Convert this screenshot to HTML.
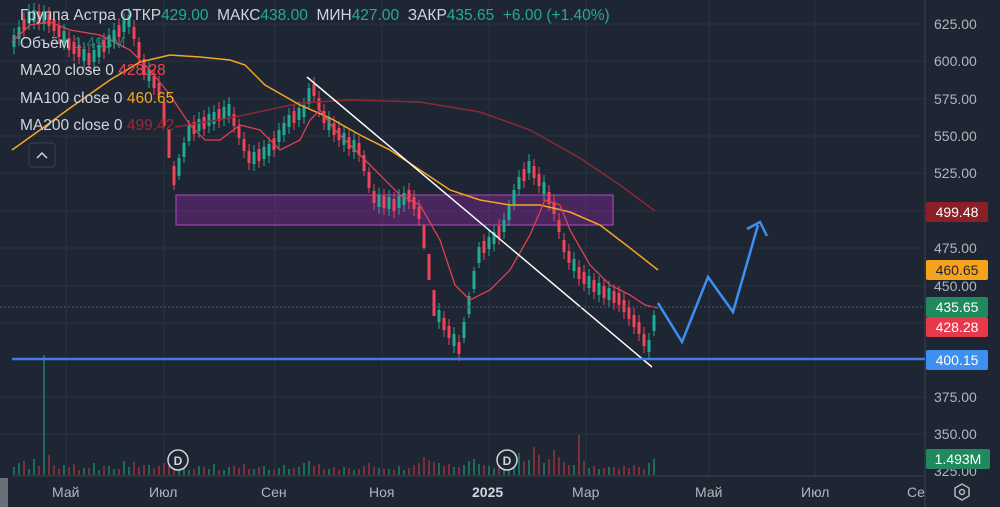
<!DOCTYPE html>
<html><head><meta charset="utf-8"><style>
html,body{margin:0;padding:0;background:#1e2633;width:1000px;height:507px;overflow:hidden;font-family:"Liberation Sans",sans-serif}
svg{position:absolute;left:0;top:0}
.lg{position:absolute;left:20px;font-size:15.5px;color:#d1d4dc;white-space:nowrap}
.g{color:#22ab94}.r{color:#f04458}.o{color:#f5a623}.dr{color:#9b2a34}
.tag{position:absolute;left:926px;width:62px;height:20px;border-radius:2px;font-size:14px;line-height:20px;text-align:center;color:#fff}
.ax{position:absolute;left:934px;font-size:14px;color:#b2b5be}
.tl{position:absolute;top:484px;font-size:14px;color:#b2b5be}
</style></head><body>
<svg width="1000" height="507" xmlns="http://www.w3.org/2000/svg">
<g stroke="#2a3340" stroke-width="1">
<line x1="0" y1="24" x2="925" y2="24"/><line x1="0" y1="61" x2="925" y2="61"/><line x1="0" y1="99" x2="925" y2="99"/><line x1="0" y1="136" x2="925" y2="136"/><line x1="0" y1="173" x2="925" y2="173"/><line x1="0" y1="211" x2="925" y2="211"/><line x1="0" y1="248" x2="925" y2="248"/><line x1="0" y1="286" x2="925" y2="286"/><line x1="0" y1="323" x2="925" y2="323"/><line x1="0" y1="397" x2="925" y2="397"/><line x1="0" y1="434" x2="925" y2="434"/>
<line x1="66" y1="0" x2="66" y2="476"/><line x1="164" y1="0" x2="164" y2="476"/><line x1="275" y1="0" x2="275" y2="476"/><line x1="382" y1="0" x2="382" y2="476"/><line x1="489" y1="0" x2="489" y2="476"/><line x1="586" y1="0" x2="586" y2="476"/><line x1="709" y1="0" x2="709" y2="476"/><line x1="815" y1="0" x2="815" y2="476"/>
</g>
<line x1="925" y1="0" x2="925" y2="507" stroke="#3a4350"/>
<line x1="12" y1="476" x2="925" y2="476" stroke="#3a4350"/>
<rect x="0" y="478" width="8" height="29" fill="#6b7078"/>
<rect x="176" y="195" width="437" height="30" fill="rgba(156,39,176,0.35)" stroke="#b04cc0" stroke-width="1"/>
<!-- volume -->
<path stroke="#1d6b5c" stroke-width="2" fill="none" d="M14 475v-8M19 475v-12M29 475v-6M34 475v-16M44 475v-120M64 475v-10M84 475v-7M94 475v-12M99 475v-5M109 475v-9M114 475v-6M124 475v-14M129 475v-8M149 475v-10M179 475v-12M184 475v-7M189 475v-5M199 475v-9M209 475v-6M214 475v-11M224 475v-5M229 475v-8M254 475v-6M264 475v-9M269 475v-5M279 475v-7M284 475v-10M289 475v-6M299 475v-8M304 475v-12M309 475v-14M329 475v-6M344 475v-8M354 475v-5M379 475v-7M389 475v-6M399 475v-9M404 475v-5M439 475v-12M454 475v-8M464 475v-10M469 475v-14M474 475v-16M479 475v-11M489 475v-9M494 475v-7M504 475v-8M509 475v-12M514 475v-18M519 475v-22M529 475v-15M544 475v-12M574 475v-10M589 475v-7M599 475v-6M609 475v-8M649 475v-12M654 475v-16"/>
<path stroke="#7a2f3a" stroke-width="2" fill="none" d="M24 475v-14M39 475v-9M49 475v-20M54 475v-10M59 475v-6M69 475v-8M74 475v-11M79 475v-5M89 475v-7M104 475v-9M119 475v-6M134 475v-13M139 475v-8M144 475v-10M154 475v-7M159 475v-9M164 475v-12M169 475v-15M174 475v-11M194 475v-6M204 475v-8M219 475v-5M234 475v-9M239 475v-7M244 475v-11M249 475v-6M259 475v-8M274 475v-5M294 475v-7M314 475v-9M319 475v-11M324 475v-6M334 475v-8M339 475v-5M349 475v-7M359 475v-6M364 475v-9M369 475v-12M374 475v-8M384 475v-6M394 475v-5M409 475v-7M414 475v-10M419 475v-12M424 475v-18M429 475v-15M434 475v-13M444 475v-9M449 475v-11M459 475v-8M484 475v-10M499 475v-9M524 475v-14M534 475v-28M539 475v-20M549 475v-16M554 475v-25M559 475v-18M564 475v-13M569 475v-10M579 475v-40M584 475v-14M594 475v-9M604 475v-7M614 475v-8M619 475v-6M624 475v-9M629 475v-7M634 475v-10M639 475v-8M644 475v-6"/>
<!-- candles green -->
<path stroke="#22ab94" stroke-width="1" fill="none" d="M14 28V54M19 20V46M29 4V30M34 3V29M44 5V31M64 24V50M84 42V68M94 43V69M99 38V64M109 28V54M114 23V49M124 13V39M129 8V34M149 62V88M179 154V180M184 137V163M189 120V146M199 112V138M209 107V133M214 105V131M224 100V126M229 97V123M254 145V171M264 140V166M269 137V163M279 123V149M284 116V142M289 108V134M299 101V127M304 98V124M309 83V109M329 111V137M344 126V152M354 133V159M379 188V214M389 190V216M399 189V215M404 186V212M439 303V329M454 327V353M464 317V343M469 292V318M474 267V293M479 242V268M489 230V256M494 225V251M504 213V239M509 200V226M514 184V210M519 170V196M529 154V180M544 175V201M574 252V278M589 269V295M599 276V302M609 281V307M649 333V359M654 310V336"/>
<path stroke="#22ab94" stroke-width="3" fill="none" d="M14 35V47M19 27V39M29 11V23M34 10V22M44 12V24M64 31V43M84 49V61M94 50V62M99 45V57M109 35V47M114 30V42M124 20V32M129 15V27M149 69V81M179 158V176M184 143V157M189 125V141M199 119V131M209 114V126M214 112V124M224 107V119M229 104V116M254 152V164M264 147V159M269 144V156M279 130V142M284 123V135M289 115V127M299 108V120M304 105V117M309 88V104M329 118V130M344 133V145M354 140V152M379 195V207M389 197V209M399 196V208M404 193V205M439 310V322M454 334V346M464 322V338M469 296V314M474 271V289M479 247V263M489 237V249M494 232V244M504 220V232M509 206V220M514 190V204M519 177V189M529 161V173M544 182V194M574 259V271M589 276V288M599 283V295M609 288V300M649 340V352M654 315V331"/>
<!-- candles red -->
<path stroke="#f04458" stroke-width="1" fill="none" d="M24 12V38M39 4V30M49 7V33M54 12V38M59 18V44M69 31V57M74 35V61M79 38V64M89 46V72M104 33V59M119 18V44M134 20V46M139 37V63M144 54V80M154 69V95M159 76V102M164 101V127M169 131V157M174 161V190M194 115V141M204 110V136M219 102V128M234 107V133M239 119V145M244 132V158M249 144V170M259 142V168M274 131V157M294 104V130M314 77V103M319 91V117M324 104V130M334 116V142M339 121V147M349 130V156M359 136V162M364 150V176M369 167V193M374 184V210M384 189V215M394 192V218M409 183V209M414 190V216M419 200V226M424 224V250M429 254V280M434 290V316M444 311V337M449 319V345M459 335V361M484 234V260M499 219V245M524 162V188M534 159V185M539 167V193M549 185V211M554 195V221M559 213V239M564 233V259M569 244V270M579 260V286M584 265V291M594 273V299M604 279V305M614 284V310M619 286V312M624 293V319M629 300V326M634 308V334M639 315V341M644 327V353"/>
<path stroke="#f04458" stroke-width="3" fill="none" d="M24 19V31M39 11V23M49 14V26M54 19V31M59 25V37M69 38V50M74 42V54M79 45V57M89 53V65M104 40V52M119 25V37M134 27V39M139 42V58M144 59V75M154 76V88M159 83V95M164 102V126M169 130V158M174 166V185M194 122V134M204 117V129M219 109V121M234 114V126M239 126V138M244 139V151M249 151V163M259 149V161M274 138V150M294 111V123M314 84V96M319 98V110M324 111V123M334 123V135M339 128V140M349 137V149M359 143V155M364 155V171M369 172V188M374 191V203M384 196V208M394 199V211M409 190V202M414 197V209M419 207V219M424 226V248M429 254V280M434 290V316M444 318V330M449 326V338M459 342V354M484 241V253M499 226V238M524 169V181M534 166V178M539 174V186M549 192V204M554 202V214M559 220V232M564 240V252M569 251V263M579 267V279M584 272V284M594 280V292M604 286V298M614 291V303M619 293V305M624 300V312M629 307V319M634 315V327M639 322V334M644 334V346"/>
<polyline fill="none" stroke="#8b2a35" stroke-width="1.5" points="175,127 230,118 300,103 350,100 420,102 480,112 530,130 580,158 620,185 655,211"/>
<polyline fill="none" stroke="#f5a623" stroke-width="1.5" points="12,150 40,130 70,108 110,80 140,62 170,55 200,57 230,60 245,65 265,85 300,105 330,118 360,135 390,150 420,170 450,190 480,200 510,205 540,205 570,212 600,225 630,248 658,270"/>
<polyline fill="none" stroke="#e0404f" stroke-width="1.3" points="12,42 30,25 50,22 70,30 100,35 130,50 150,70 170,95 190,125 205,140 220,140 240,125 260,130 280,150 300,140 310,120 320,110 335,130 360,155 380,175 400,195 420,205 440,240 455,285 470,300 490,290 510,270 530,235 545,200 560,205 570,230 590,265 610,285 630,295 645,305 658,308"/>
<line x1="307" y1="77" x2="652" y2="367" stroke="#fff" stroke-width="1.5"/>
<line x1="12" y1="359" x2="925" y2="359" stroke="#3d7fe0" stroke-width="2.5"/>
<line x1="0" y1="307" x2="925" y2="307" stroke="#4b5563" stroke-dasharray="2,2"/>
<polyline fill="none" stroke="#3d8ff0" stroke-width="2.5" points="658,303 682,342 708,277 733,312 758,225"/>
<polyline fill="none" stroke="#3d8ff0" stroke-width="2.5" points="747,229 760,222 767,236"/>
<g fill="#1e2633" stroke="#d1d4dc" stroke-width="1.5"><circle cx="178" cy="460" r="10"/><circle cx="507" cy="460" r="10"/></g>
<g fill="#d1d4dc" font-size="12" font-weight="bold" text-anchor="middle" font-family="Liberation Sans"><text x="178" y="465">D</text><text x="507" y="465">D</text></g>
<rect x="29" y="143" width="26" height="24" rx="3" fill="#1e2633" stroke="#3a4350"/>
<polyline fill="none" stroke="#d1d4dc" stroke-width="1.5" points="37,158 42,153 47,158"/>
<g transform="translate(962,492)" fill="none" stroke="#b2b5be" stroke-width="1.5"><polygon points="0,-8 7,-4 7,4 0,8 -7,4 -7,-4"/><circle r="2.5"/></g>
</svg>
<div class="lg" style="top:7px">Группа Астра ОТКР<span class="g">429.00</span>&nbsp; МАКС<span class="g">438.00</span>&nbsp; МИН<span class="g">427.00</span>&nbsp; ЗАКР<span class="g">435.65</span>&nbsp; <span class="g">+6.00 (+1.40%)</span></div>
<div class="lg" style="top:35px">Объём <span class="g" style="opacity:.6">1.493M</span></div>
<div class="lg" style="top:62px">MA20 close 0 <span class="r">428.28</span></div>
<div class="lg" style="top:90px">MA100 close 0 <span class="o">460.65</span></div>
<div class="lg" style="top:117px">MA200 close 0 <span class="dr">499.42</span></div>
<div class="ax" style="top:16px">625.00</div><div class="ax" style="top:53px">600.00</div><div class="ax" style="top:91px">575.00</div><div class="ax" style="top:128px">550.00</div><div class="ax" style="top:165px">525.00</div><div class="ax" style="top:240px">475.00</div><div class="ax" style="top:278px">450.00</div><div class="ax" style="top:389px">375.00</div><div class="ax" style="top:426px">350.00</div><div class="ax" style="top:463px">325.00</div>
<div class="tag" style="top:202px;background:#8b1e27">499.48</div>
<div class="tag" style="top:260px;background:#f7a21b;color:#1e2633">460.65</div>
<div class="tag" style="top:297px;background:#1f8a5e">435.65</div>
<div class="tag" style="top:317px;background:#e8394b">428.28</div>
<div class="tag" style="top:350px;background:#3d8ff0">400.15</div>
<div class="tag" style="top:449px;width:64px;background:#1f8a5e">1.493M</div>
<div class="tl" style="left:52px">Май</div><div class="tl" style="left:149px">Июл</div><div class="tl" style="left:261px">Сен</div><div class="tl" style="left:369px">Ноя</div><div class="tl" style="left:472px;font-weight:bold;color:#d1d4dc">2025</div><div class="tl" style="left:572px">Мар</div><div class="tl" style="left:695px">Май</div><div class="tl" style="left:801px">Июл</div><div class="tl" style="left:907px">Се</div>
</body></html>
